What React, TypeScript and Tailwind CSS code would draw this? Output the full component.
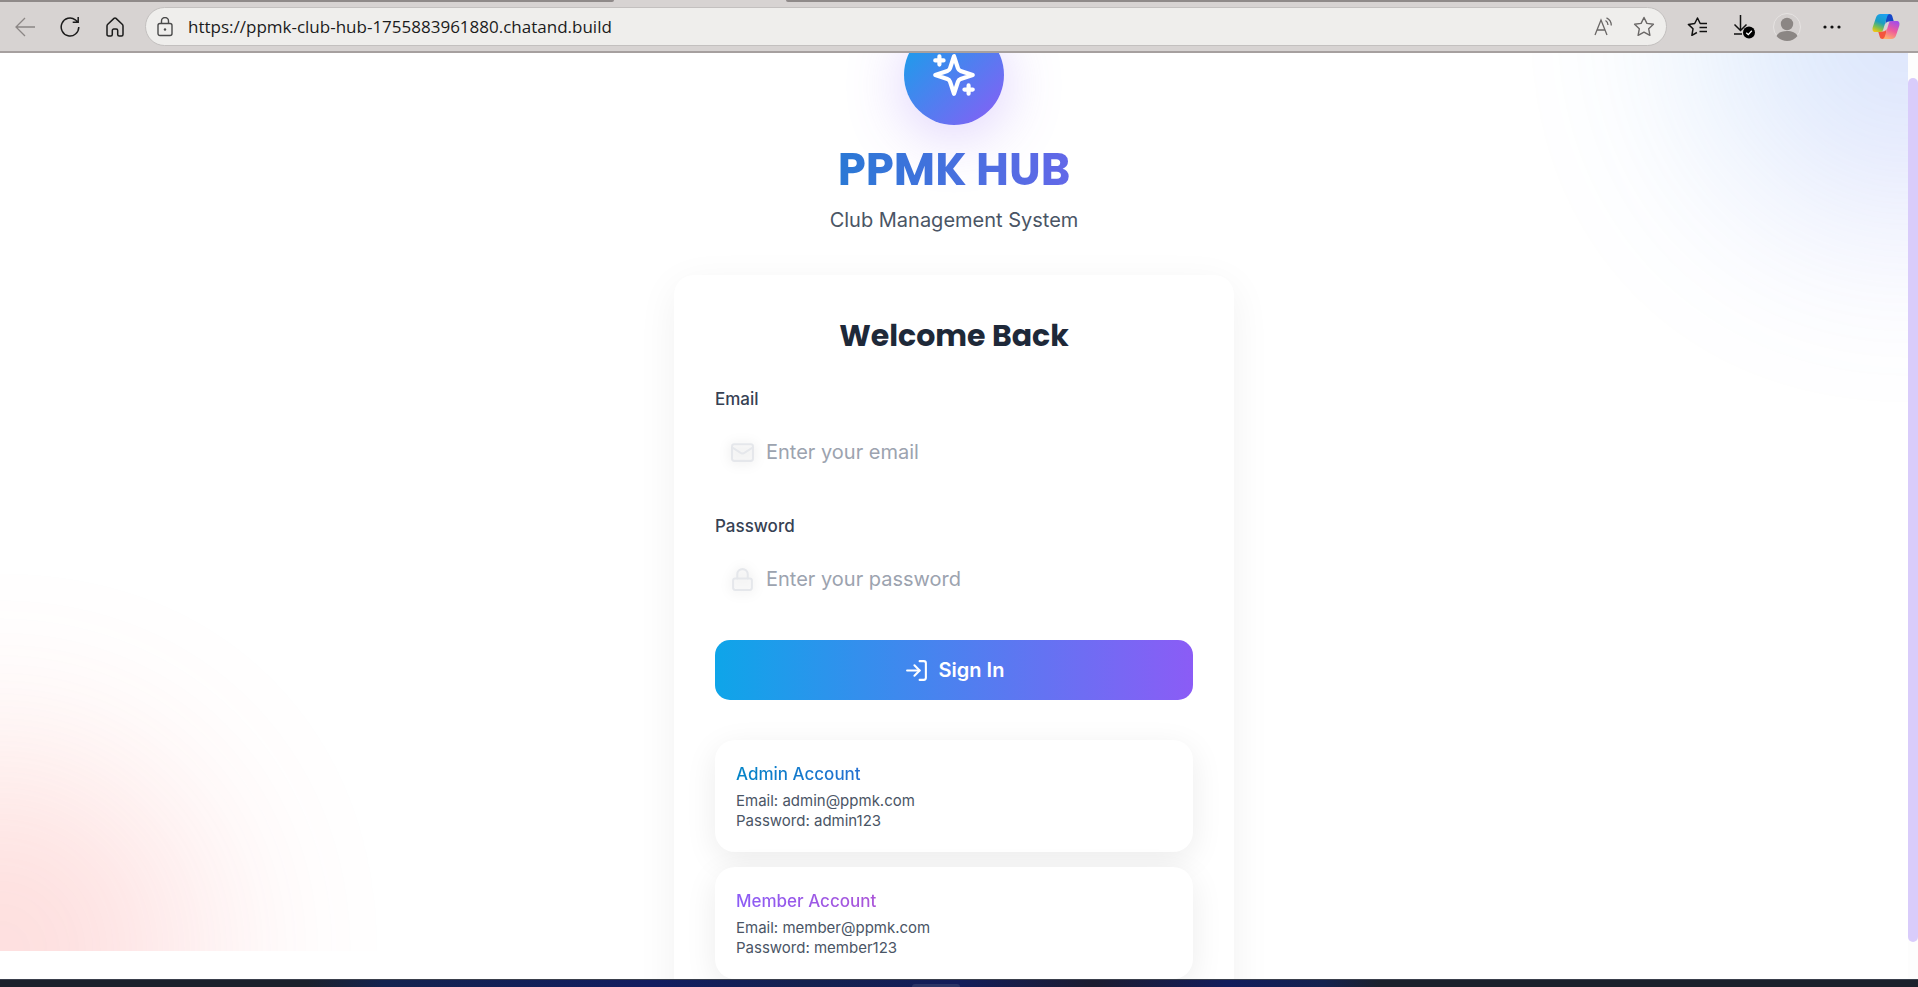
import { useState, FormEvent, ReactNode } from "react";
import { LogIn, Mail, Lock } from "lucide-react";

interface DemoAccount {
  title: string;
  email: string;
  password: string;
  titleClass: string;
}

const demoAccounts: DemoAccount[] = [
  {
    title: "Admin Account",
    email: "admin@ppmk.com",
    password: "admin123",
    titleClass: "from-[#0284c7] to-[#7c3aed]",
  },
  {
    title: "Member Account",
    email: "member@ppmk.com",
    password: "member123",
    titleClass: "from-[#8b5cf6] to-[#ec4899]",
  },
];

function ToolbarButton({ label, children }: { label: string; children: ReactNode }) {
  return (
    <button type="button" aria-label={label} className="flex size-7 items-center justify-center">
      {children}
    </button>
  );
}

function SparklesIcon() {
  return (
    <svg
      width="50"
      height="50"
      viewBox="0 0 24 24"
      fill="none"
      stroke="white"
      strokeWidth="2"
      strokeLinecap="round"
      strokeLinejoin="round"
    >
      <path d="m12 3-1.912 5.813a2 2 0 0 1-1.275 1.275L3 12l5.813 1.912a2 2 0 0 1 1.275 1.275L12 21l1.912-5.813a2 2 0 0 1 1.275-1.275L21 12l-5.813-1.912a2 2 0 0 1-1.275-1.275L12 3Z" />
      <path d="M5 3v4M19 17v4M3 5h4M17 19h4" />
    </svg>
  );
}

function CopilotLogo() {
  return (
    <svg width="28" height="27" viewBox="0 0 28 27">
      <defs>
        <linearGradient id="copilot-left" x1="0.6" y1="0" x2="0.2" y2="1">
          <stop offset="0" stopColor="#1ba0f0" />
          <stop offset="0.45" stopColor="#1b9ec0" />
          <stop offset="0.75" stopColor="#7fbf4c" />
          <stop offset="1" stopColor="#f2c513" />
        </linearGradient>
        <linearGradient id="copilot-right" x1="0.7" y1="0" x2="0.3" y2="1">
          <stop offset="0" stopColor="#a44de8" />
          <stop offset="0.5" stopColor="#ee5a9c" />
          <stop offset="1" stopColor="#ffb26b" />
        </linearGradient>
      </defs>
      <path d="M14 1h3.500c1.500 0 2.300.8 2.800 2.200L21.800 8.500H17c-2 0-3 1-3.500 2.800z" fill="#1648c8" />
      <path d="M14 26h-3.500c-1.500 0-2.300-.8-2.800-2.200L6.200 18.500H11c2 0 3-1 3.500-2.800z" fill="#f4553d" />
      <path d="M8.500 1H18c-1.500 0-2.300 1-2.800 2.500l-4 13C10.600 18.300 9.600 19 8 19H3.500C.8 19 0 17 .8 14L4 4.500C4.800 2.200 6.200 1 8.500 1z" fill="url(#copilot-left)" />
      <path d="M19.500 26H10c1.500 0 2.300-1 2.800-2.500l4-13C17.400 8.700 18.400 8 20 8h4.500c2.700 0 3.500 2 2.700 5L24 22.500c-.8 2.300-2.200 3.500-4.500 3.500z" fill="url(#copilot-right)" />
    </svg>
  );
}

function BrowserBar() {
  return (
    <header className="shrink-0 border-b-2 border-[#a6a09f] bg-[#d7d3d2] text-[#1b1b1b]">
      {/* Bottom edge of the tab strip, open under the active tab */}
      <div className="flex h-0.5">
        <div className="w-[32%] rounded-br-sm bg-[#8f8a89]" />
        <div className="w-[9%]" />
        <div className="flex-1 rounded-bl-sm bg-[#8f8a89]" />
      </div>

      <div className="flex h-[49px] items-center pr-[18px] pl-[11px]">
        <nav className="flex items-center gap-[17px]">
          <ToolbarButton label="Back">
            <svg width="20" height="20" viewBox="0 0 20 20" fill="none" stroke="#8b8685" strokeWidth="1.300">
              <path d="M20 10H1M10 1 1 10l9 9" />
            </svg>
          </ToolbarButton>
          <ToolbarButton label="Refresh">
            <svg width="20" height="22" viewBox="0 0 20 22" fill="none" stroke="currentColor" strokeWidth="1.500">
              <path d="M18.800 11a8.800 9 0 1 1-3.500-7.200l2.700 2.400M18.200 1v5.300h-5.500" />
            </svg>
          </ToolbarButton>
          <ToolbarButton label="Home">
            <svg width="18" height="20" viewBox="0 0 18 20" fill="none" stroke="currentColor" strokeWidth="1.500" strokeLinejoin="round">
              <path d="M8 1.400a1.500 1.500 0 0 1 2 0l6.200 5.900c.5.500.8 1 .8 1.700v8.500c0 .9-.6 1.500-1.500 1.500h-2.300c-.9 0-1.500-.6-1.500-1.500v-4c0-.9-.6-1.500-1.500-1.500H7.800c-.9 0-1.500.6-1.500 1.500v4c0 .9-.6 1.500-1.500 1.500H2.500C1.600 19 1 18.400 1 17.500V9c0-.7.3-1.200.8-1.700z" />
            </svg>
          </ToolbarButton>
        </nav>

        <div className="ml-4 flex h-[39px] flex-1 items-center rounded-full border border-[#c3c0bf] bg-[#efeeec] pr-2 pl-[11px]">
          <svg width="16" height="20" viewBox="0 0 16 20" fill="none" stroke="#4a4a4a" strokeWidth="1.400">
            <rect x="1" y="6.500" width="14" height="12" rx="2" />
            <path d="M4.500 6.500V4a3.500 3.500 0 0 1 7 0v2.500" />
            <circle cx="8" cy="12.500" r="1.200" fill="#4a4a4a" stroke="none" />
          </svg>
          <input
            type="text"
            aria-label="Address"
            defaultValue="https://ppmk-club-hub-1755883961880.chatand.build"
            className="ml-[15px] min-w-0 flex-1 bg-transparent font-['Open_Sans',sans-serif] text-[17px] outline-none"
          />
          <div className="flex items-center gap-3">
            <ToolbarButton label="Read aloud">
              <svg width="20" height="20" viewBox="0 0 20 20" fill="none" stroke="#6a6766" strokeWidth="1.300">
                <path d="M1 18 7 3l6 15M3.200 13h7.600M11.500 3.500c1.700 1 2.500 2.500 2.500 4.500M12.500.8c3 1.400 4.800 4 4.800 7.700" />
              </svg>
            </ToolbarButton>
            <ToolbarButton label="Add to favorites">
              <svg width="22" height="21" viewBox="0 0 22 21" fill="none" stroke="#6a6766" strokeWidth="1.400" strokeLinejoin="round">
                <path d="m11 1.500 2.900 5.900 6.500.9-4.700 4.500 1.200 6.500L11 16.200l-5.900 3.100 1.200-6.500L1.600 8.300l6.500-.9z" />
              </svg>
            </ToolbarButton>
          </div>
        </div>

        <div className="ml-4 flex items-center gap-[17px]">
          <ToolbarButton label="Favorites">
            <svg width="21" height="20" viewBox="0 0 21 20" fill="none" stroke="#111" strokeWidth="1.500" strokeLinejoin="round">
              <path d="M20 6.500h-6.800L10.500 1 7.700 6.500l-6.300.9 4.600 4.400-1.100 6.500 5-2.800M12.500 10.500H20M12.500 14.500H20" />
            </svg>
          </ToolbarButton>
          <ToolbarButton label="Downloads">
            <svg width="26" height="25" viewBox="-4 0 26 25" fill="none" stroke="#111" strokeWidth="1.500">
              <path d="M7.500 1v15M1.500 10.500l6 6 6-6M1 20h8" />
              <circle cx="16" cy="18.500" r="6" fill="#000" stroke="none" />
              <path d="m13.300 18.700 2 1.900 3.500-3.800" stroke="#fff" strokeWidth="1.300" />
            </svg>
          </ToolbarButton>
          <ToolbarButton label="Profile">
            <svg width="28" height="28" viewBox="0 0 28 28">
              <circle cx="14" cy="14" r="13.500" fill="#d3cfce" stroke="#e6e3e2" />
              <circle cx="14" cy="11" r="6.200" fill="#8b8684" />
              <path d="M3.500 23c1.500-3.500 5.500-5 10.500-5s9 1.500 10.500 5A13.500 13.500 0 0 1 14 28c-4.300 0-8-1.800-10.500-5z" fill="#8b8684" />
            </svg>
          </ToolbarButton>
          <ToolbarButton label="Settings and more">
            <svg width="18" height="4" viewBox="0 0 18 4" fill="#111">
              <circle cx="2" cy="2" r="1.600" />
              <circle cx="9" cy="2" r="1.600" />
              <circle cx="16" cy="2" r="1.600" />
            </svg>
          </ToolbarButton>
        </div>
        <div className="ml-[26px] flex">
          <ToolbarButton label="Copilot">
            <CopilotLogo />
          </ToolbarButton>
        </div>
      </div>
    </header>
  );
}

interface FieldProps {
  id: string;
  label: string;
  type: string;
  placeholder: string;
  icon: ReactNode;
  value: string;
  onChange: (value: string) => void;
}

function Field({ id, label, type, placeholder, icon, value, onChange }: FieldProps) {
  return (
    <div>
      <label htmlFor={id} className="mb-2 block text-[17px] leading-[27px] font-medium text-gray-700">
        {label}
      </label>
      <div className="flex h-[62px] items-center gap-[11px] px-[15px]">
        <span className="text-gray-200 drop-shadow-[0_1px_6px_rgba(0,0,0,0.15)]">{icon}</span>
        <input
          id={id}
          type={type}
          placeholder={placeholder}
          value={value}
          onChange={(e) => onChange(e.target.value)}
          className="min-w-0 flex-1 bg-transparent text-xl text-gray-700 outline-none placeholder:text-[#9ca3af]"
        />
      </div>
    </div>
  );
}

export default function App() {
  const [email, setEmail] = useState("");
  const [password, setPassword] = useState("");

  const handleSubmit = (e: FormEvent<HTMLFormElement>) => {
    e.preventDefault();
  };

  return (
    <div className="flex h-screen flex-col overflow-hidden bg-white font-['Inter',sans-serif]">
      <BrowserBar />

      <div className="flex min-h-0 flex-1">
        <main className="relative min-w-0 flex-1 overflow-hidden">
          {/* Background blobs */}
          <div className="absolute inset-x-0 -top-7 bottom-7 overflow-hidden">
            <div className="absolute -top-50 -right-50 size-100 rounded-full bg-linear-to-br/srgb from-[#0ea5e9] to-[#8b5cf6] opacity-20 blur-[100px]" />
            <div className="absolute -bottom-50 -left-50 size-100 rounded-full bg-linear-to-br/srgb from-[#fb6a4a] to-[#f5405a] opacity-20 blur-[100px]" />
          </div>

          <div className="relative mx-auto -mt-7 w-full max-w-[560px]">
            <div className="mb-10 text-center">
              <div className="mx-auto mb-5 flex size-25 items-center justify-center rounded-full bg-linear-to-br/srgb from-[#0ea5e9] to-[#8b5cf6] shadow-[0_10px_60px_rgba(139,92,246,0.3)]">
                <SparklesIcon />
              </div>
              <h1 className="mb-2.5 bg-linear-to-r/srgb from-[#0284c7] to-[#8b5cf6] bg-clip-text font-['Poppins','Inter',sans-serif] text-[45px] leading-[50px] font-bold text-transparent">
                PPMK HUB
              </h1>
              <p className="text-xl leading-[30px] text-gray-600">Club Management System</p>
            </div>

            <div className="rounded-[20px] bg-white p-[41px] shadow-[0_10px_40px_rgba(0,0,0,0.06)]">
              <h2 className="mb-[30px] text-center font-['Poppins','Inter',sans-serif] text-[30px] leading-10 font-bold text-gray-800">
                Welcome Back
              </h2>

              <form onSubmit={handleSubmit} className="flex flex-col gap-[30px]">
                <Field
                  id="email"
                  label="Email"
                  type="email"
                  placeholder="Enter your email"
                  icon={<Mail size={25} />}
                  value={email}
                  onChange={setEmail}
                />
                <Field
                  id="password"
                  label="Password"
                  type="password"
                  placeholder="Enter your password"
                  icon={<Lock size={25} />}
                  value={password}
                  onChange={setPassword}
                />
                <button
                  type="submit"
                  className="flex h-[60px] items-center justify-center gap-2.5 rounded-[15px] bg-linear-to-r/srgb from-[#0ea5e9] to-[#8b5cf6] text-xl font-semibold text-white"
                >
                  <LogIn size={25} />
                  Sign In
                </button>
              </form>

              <div className="mt-10 flex flex-col gap-[15px]">
                {demoAccounts.map((account) => (
                  <div
                    key={account.email}
                    className="h-28 rounded-[20px] bg-white p-[21px] shadow-[0_8px_32px_rgba(0,0,0,0.08)]"
                  >
                    <h3
                      className={`mb-[3px] bg-linear-to-r/srgb bg-clip-text text-[17px] leading-[27px] font-medium text-transparent ${account.titleClass}`}
                    >
                      {account.title}
                    </h3>
                    <p className="text-[15px] leading-5 text-gray-600">Email: {account.email}</p>
                    <p className="text-[15px] leading-5 text-gray-600">Password: {account.password}</p>
                  </div>
                ))}
              </div>
            </div>
          </div>
        </main>

        {/* Scrollbar */}
        <div className="flex w-2.5 shrink-0 bg-[#fdfdfd] pt-[25px] pb-[37px]">
          <div className="flex-1 rounded-full bg-[#d9ccfb]" />
        </div>
      </div>

      {/* Taskbar edge */}
      <footer className="flex h-2 shrink-0 items-end justify-center border-t border-[#3a3f4c] bg-[linear-gradient(to_right,#1b212c_16%,#13234f_20%,#121d60_34%,#14224f_42%,#131d5a_50%,#1c1c30_57%,#121d5c_64%,#14224f_69%,#1b212c_72%)] pr-[46px]">
        <div className="h-[3px] w-12 rounded-t-sm bg-[#2b3566]" />
      </footer>
    </div>
  );
}
